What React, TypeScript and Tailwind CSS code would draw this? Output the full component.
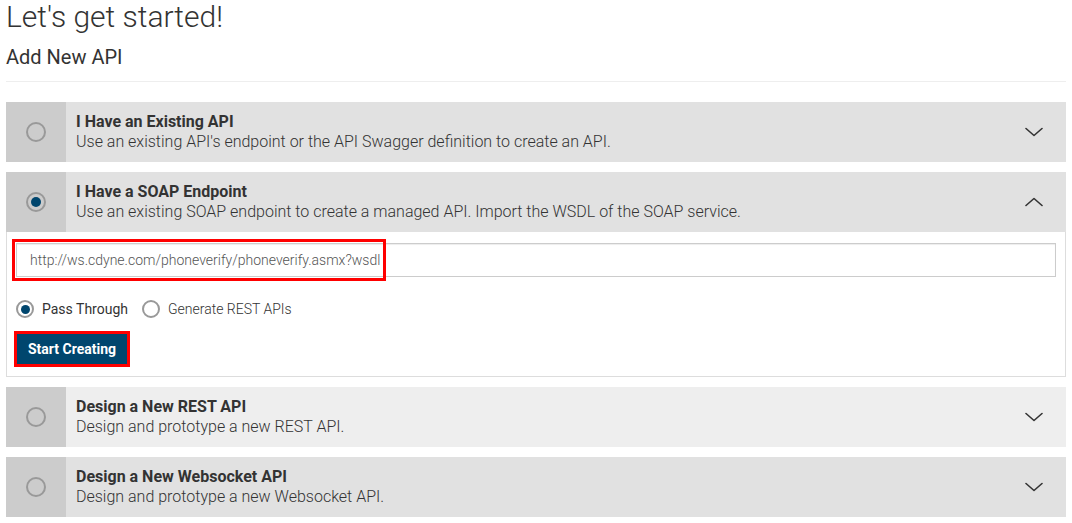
import { useState } from "react";

type ApiOption = {
  id: string;
  title: string;
  description: string;
  bg: string;
};

const options: ApiOption[] = [
  {
    id: "existing",
    title: "I Have an Existing API",
    description:
      "Use an existing API's endpoint or the API Swagger definition to create an API.",
    bg: "bg-[#e1e1e1]",
  },
  {
    id: "soap",
    title: "I Have a SOAP Endpoint",
    description:
      "Use an existing SOAP endpoint to create a managed API. Import the WSDL of the SOAP service.",
    bg: "bg-[#e1e1e1]",
  },
  {
    id: "rest",
    title: "Design a New REST API",
    description: "Design and prototype a new REST API.",
    bg: "bg-[#eeeeee]",
  },
  {
    id: "websocket",
    title: "Design a New Websocket API",
    description: "Design and prototype a new Websocket API.",
    bg: "bg-[#e1e1e1]",
  },
];

function Chevron({ up }: { up?: boolean }) {
  return (
    <svg width="18" height="10" viewBox="0 0 18 10" fill="none">
      <polyline
        points={up ? "1,8.5 9,1.5 17,8.5" : "1,1.5 9,8.5 17,1.5"}
        stroke="#333333"
        strokeWidth="1.6"
        strokeLinecap="round"
        strokeLinejoin="round"
      />
    </svg>
  );
}

function BigRadio({ checked }: { checked: boolean }) {
  return (
    <span className="flex h-[20px] w-[20px] items-center justify-center rounded-full border-2 border-[#999999]">
      {checked && <span className="h-[10px] w-[10px] rounded-full bg-[#00466e]" />}
    </span>
  );
}

function SmallRadio({ checked }: { checked: boolean }) {
  return (
    <span className="flex h-[18px] w-[18px] items-center justify-center rounded-full border-2 border-[#999999] bg-white">
      {checked && <span className="h-[9px] w-[9px] rounded-full bg-[#00466e]" />}
    </span>
  );
}

export default function App() {
  const [selected, setSelected] = useState("soap");
  const [mode, setMode] = useState("pass");

  return (
    <div className="min-h-screen bg-white px-[6px] font-['Roboto',sans-serif] text-[#333333]">
      <h1 className="text-[30px] font-light leading-[34px] text-[#333333]">
        Let's get started!
      </h1>
      <h2 className="mt-[11px] text-[20px] font-normal leading-[24px] text-[#333333]">
        Add New API
      </h2>
      <div className="mt-[12px] h-px bg-[#eeeeee]" />

      <div className="mt-[20px] flex flex-col gap-[10px]">
        {options.map((opt) => {
          const open = opt.id === selected;
          return (
            <div key={opt.id}>
              <div
                className={`flex h-[60px] cursor-pointer ${opt.bg}`}
                onClick={() => setSelected(opt.id)}
              >
                <div className="flex w-[60px] shrink-0 items-center justify-center bg-[#cccccc]">
                  <BigRadio checked={open} />
                </div>
                <div className="flex flex-1 flex-col justify-center pl-[10px] pb-[1px]">
                  <div className="text-[16px] font-bold leading-[20px]">{opt.title}</div>
                  <div className="text-[16px] font-light leading-[20px]">{opt.description}</div>
                </div>
                <div className="flex w-[62px] items-center justify-center pr-[2px]">
                  <Chevron up={open} />
                </div>
              </div>

              {open && (
                <div className="border border-t-0 border-[#dddddd] px-[9px] pt-[11px] pb-[9px]">
                  <div className="relative">
                    <input
                      className="h-[34px] w-full border border-[#cccccc] px-[13px] text-[14px] font-light text-[#555555] shadow-[inset_0_1px_1px_rgba(0,0,0,0.075)] outline-none"
                      defaultValue="http://ws.cdyne.com/phoneverify/phoneverify.asmx?wsdl"
                    />
                    <div className="pointer-events-none absolute -top-[4px] -left-[4px] h-[42px] w-[374px] border-[3px] border-[#ff0000]" />
                  </div>

                  <div className="mt-[23px] flex h-[18px] items-center text-[14px] text-[#333333]">
                    <label
                      className="flex cursor-pointer items-center gap-[8px]"
                      onClick={() => setMode("pass")}
                    >
                      <SmallRadio checked={mode === "pass"} />
                      <span>Pass Through</span>
                    </label>
                    <label
                      className="ml-[14px] flex cursor-pointer items-center gap-[8px]"
                      onClick={() => setMode("rest")}
                    >
                      <SmallRadio checked={mode === "rest"} />
                      <span className="font-light">Generate REST APIs</span>
                    </label>
                  </div>

                  <div className="mt-[13px] -ml-[2px] inline-block border-[3px] border-[#ff0000]">
                    <button className="block h-[30px] w-[110px] bg-[#00466e] text-[14px] font-bold text-white">
                      Start Creating
                    </button>
                  </div>
                </div>
              )}
            </div>
          );
        })}
      </div>
    </div>
  );
}
